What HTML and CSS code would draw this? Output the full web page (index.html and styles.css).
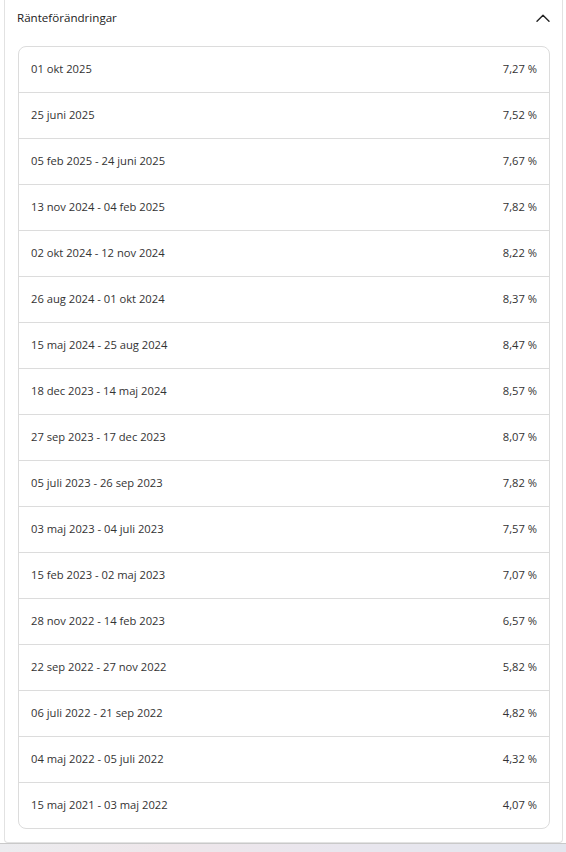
FILE: index.html
```html
<!DOCTYPE html>
<html lang="sv">
<head>
<meta charset="utf-8">
<title>Ränteförändringar</title>
<link rel="stylesheet" href="styles.css">
</head>
<body>
<div class="page">
  <section class="panel">
    <header class="panel-head">
      <h2 class="panel-title">Ränteförändringar</h2>
      <svg class="chevron" width="14" height="8" viewBox="0 0 14 8" aria-hidden="true">
        <path d="M1 7.2 L7 1.2 L13 7.2" fill="none" stroke="#222" stroke-width="1.4" stroke-linecap="round" stroke-linejoin="round"/>
      </svg>
    </header>
    <ul class="rate-list">
      <li class="rate-row"><span>01 okt 2025</span><span>7,27 %</span></li>
      <li class="rate-row"><span>25 juni 2025</span><span>7,52 %</span></li>
      <li class="rate-row"><span>05 feb 2025 - 24 juni 2025</span><span>7,67 %</span></li>
      <li class="rate-row"><span>13 nov 2024 - 04 feb 2025</span><span>7,82 %</span></li>
      <li class="rate-row"><span>02 okt 2024 - 12 nov 2024</span><span>8,22 %</span></li>
      <li class="rate-row"><span>26 aug 2024 - 01 okt 2024</span><span>8,37 %</span></li>
      <li class="rate-row"><span>15 maj 2024 - 25 aug 2024</span><span>8,47 %</span></li>
      <li class="rate-row"><span>18 dec 2023 - 14 maj 2024</span><span>8,57 %</span></li>
      <li class="rate-row"><span>27 sep 2023 - 17 dec 2023</span><span>8,07 %</span></li>
      <li class="rate-row"><span>05 juli 2023 - 26 sep 2023</span><span>7,82 %</span></li>
      <li class="rate-row"><span>03 maj 2023 - 04 juli 2023</span><span>7,57 %</span></li>
      <li class="rate-row"><span>15 feb 2023 - 02 maj 2023</span><span>7,07 %</span></li>
      <li class="rate-row"><span>28 nov 2022 - 14 feb 2023</span><span>6,57 %</span></li>
      <li class="rate-row"><span>22 sep 2022 - 27 nov 2022</span><span>5,82 %</span></li>
      <li class="rate-row"><span>06 juli 2022 - 21 sep 2022</span><span>4,82 %</span></li>
      <li class="rate-row"><span>04 maj 2022 - 05 juli 2022</span><span>4,32 %</span></li>
      <li class="rate-row"><span>15 maj 2021 - 03 maj 2022</span><span>4,07 %</span></li>
    </ul>
  </section>
  <div class="taskbar"></div>
</div>
</body>
</html>
```
FILE: styles.css
```css
* { box-sizing: border-box; }
html, body { margin: 0; padding: 0; background: #fff; }
body {
  font-family: "Open Sans", "Noto Sans", sans-serif;
  color: #2b2b2b;
  width: 566px;
  height: 852px;
  overflow: hidden;
}
.page {
  display: flex;
  flex-direction: column;
  height: 852px;
}
.panel {
  margin: 0 3px 0 4px;
  border: 1px solid #e2e2e2;
  border-top: none;
  border-radius: 0 0 4px 4px;
  height: 843px;
  padding: 0 12px 0 13px;
  background: #fff;
}
.panel-head {
  display: flex;
  align-items: center;
  justify-content: space-between;
  height: 46px;
  padding: 0 0 11px 0;
}
.panel-title {
  margin: 0 0 0 -1px;
  font-size: 11.6px;
  font-weight: 500;
  color: #222;
}
.chevron { margin-right: 0; display: block; }
.rate-list {
  list-style: none;
  margin: 0;
  padding: 0;
  border: 1px solid #dcdcdc;
  border-radius: 8px;
}
.rate-row {
  display: flex;
  justify-content: space-between;
  align-items: center;
  height: 46px;
  padding: 0 12px 2px;
  font-size: 11.2px;
  color: #333;
  border-top: 1px solid #dcdcdc;
}
.rate-row:first-child { border-top: none; height: 45px; }
.taskbar {
  flex: 1;
  border-top: 1px solid #c9c9c9;
  background: linear-gradient(90deg, #ececef 0%, #eee6ea 30%, #e9e6ee 60%, #e3e6ee 100%);
}
```
